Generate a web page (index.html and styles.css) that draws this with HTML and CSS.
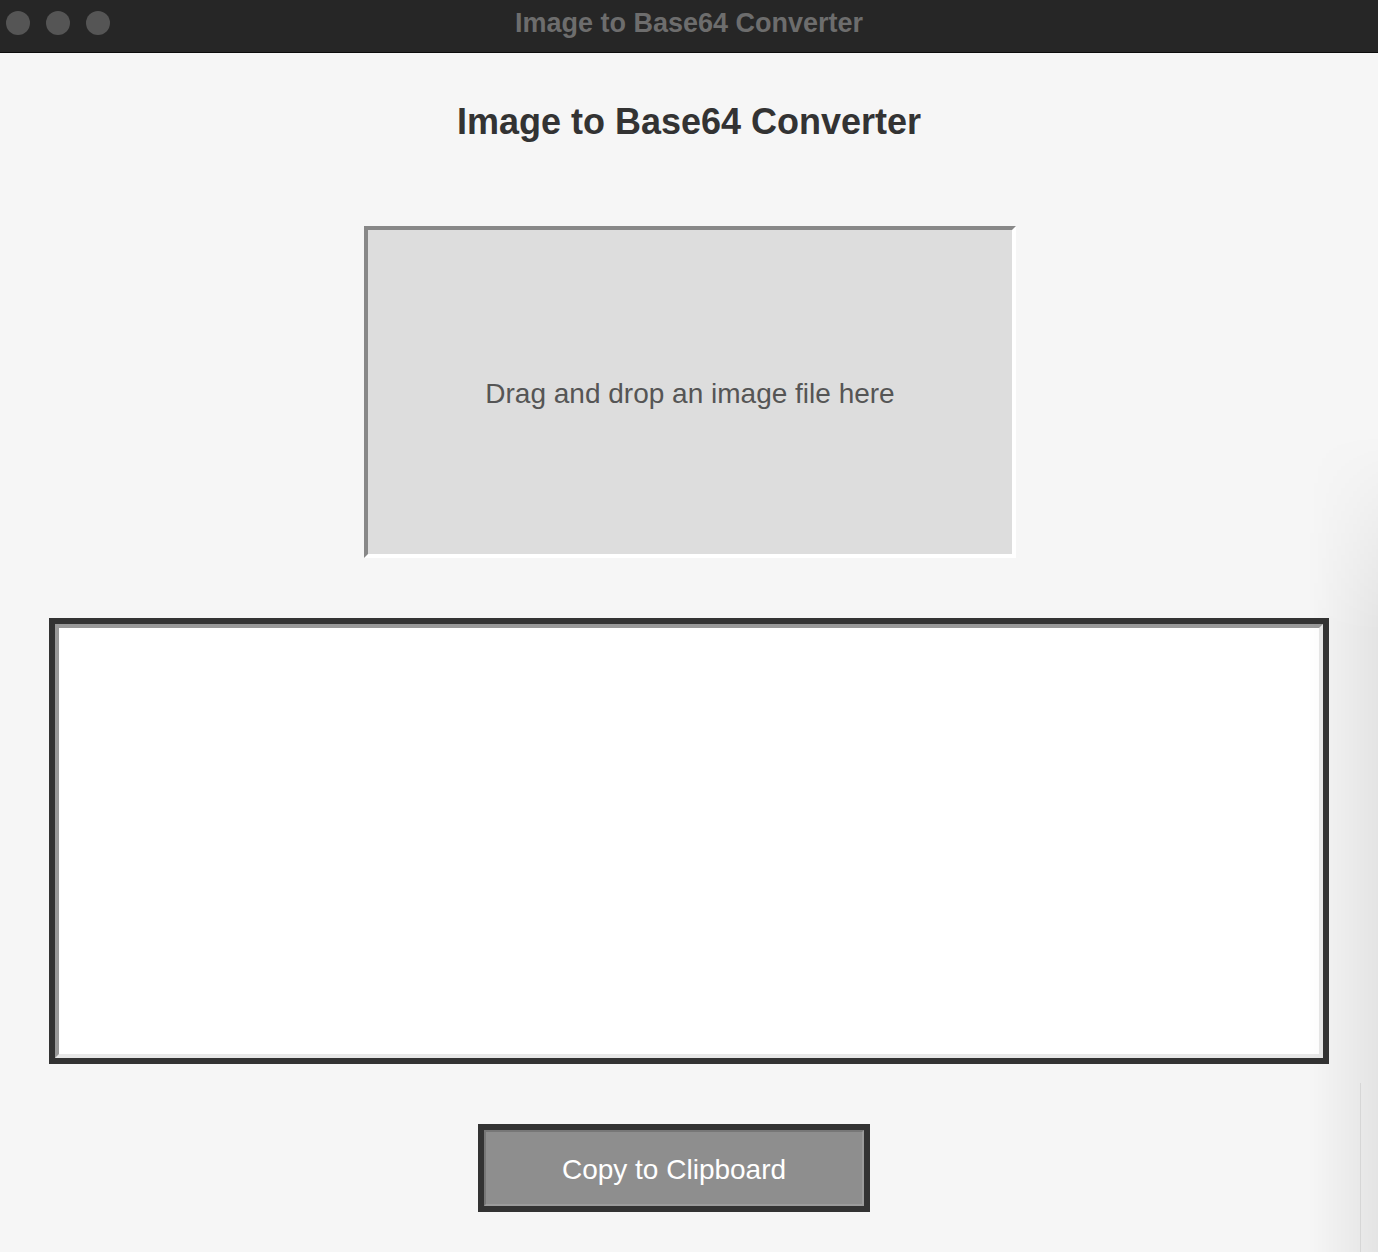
FILE: index.html
```html
<!DOCTYPE html>
<html>
<head>
<meta charset="utf-8">
<link rel="stylesheet" href="styles.css">
</head>
<body>
<div class="window">
  <div class="titlebar">
    <div class="lights">
      <span class="light"></span><span class="light"></span><span class="light"></span>
    </div>
    <div class="wtitle">Image to Base64 Converter</div>
  </div>
  <main class="content">
    <h1 class="heading">Image to Base64 Converter</h1>
    <div class="dropzone">Drag and drop an image file here</div>
    <div class="output"><div class="output-inner"></div></div>
    <div class="btn-frame"><button class="copy-btn">Copy to Clipboard</button></div>
    <div class="edge-shadow"></div>
    <div class="edge-line"></div>
  </main>
</div>
</body>
</html>
```

FILE: styles.css
```css
html, body {
  margin: 0;
  padding: 0;
  background: #f6f6f6;
  font-family: "Liberation Sans", Arial, sans-serif;
}
.window {
  width: 1378px;
  height: 1252px;
  display: flex;
  flex-direction: column;
  overflow: hidden;
}
.titlebar {
  height: 52px;
  background: #262626;
  border-bottom: 1px solid #0c0c0c;
  position: relative;
  display: flex;
  align-items: center;
  justify-content: center;
  flex-shrink: 0;
}
.lights {
  position: absolute;
  left: 6px;
  top: 11px;
  display: flex;
  gap: 16px;
}
.light {
  width: 24px;
  height: 24px;
  border-radius: 50%;
  background: #555555;
}
.wtitle {
  color: #6d6d6d;
  font-weight: bold;
  font-size: 27px;
  margin-top: -5px;
}
.content {
  flex: 1;
  position: relative;
  display: flex;
  flex-direction: column;
  align-items: center;
}
.heading {
  margin: 47px 0 0 0;
  font-size: 36px;
  line-height: 44px;
  color: #333333;
  font-weight: bold;
}
.dropzone {
  margin-top: 82px;
  margin-left: 2px;
  width: 644px;
  height: 320px;
  padding-top: 4px;
  border: 4px solid;
  border-color: #888888 #ffffff #ffffff #888888;
  background: #dddddd;
  color: #555555;
  font-size: 28px;
  display: flex;
  align-items: center;
  justify-content: center;
}
.output {
  margin-top: 60px;
  width: 1268px;
  height: 434px;
  border: 6px solid #333333;
}
.output-inner {
  height: 426px;
  border: 4px solid;
  border-color: #999999 #e8e8e8 #e8e8e8 #999999;
  background: #ffffff;
}
.btn-frame {
  margin-top: 60px;
  margin-right: 30px;
  width: 380px;
  height: 76px;
  border: 6px solid #333333;
  display: flex;
}
.copy-btn {
  flex: 1;
  margin: 0;
  border: 2px solid;
  border-color: #777777 #9c9c9c #9c9c9c #777777;
  background: #8e8e8e;
  color: #ffffff;
  font-family: "Liberation Sans", Arial, sans-serif;
  font-size: 28px;
  padding: 4px 0 0 0;
}
.edge-shadow {
  position: absolute;
  right: 0;
  top: 380px;
  bottom: 0;
  width: 70px;
  background: linear-gradient(to right, rgba(0,0,0,0), rgba(0,0,0,0.07));
  -webkit-mask-image: linear-gradient(to bottom, transparent, black 200px);
  mask-image: linear-gradient(to bottom, transparent, black 200px);
  pointer-events: none;
}
.edge-line {
  position: absolute;
  left: 1360px;
  top: 1030px;
  bottom: 0;
  width: 1px;
  background: #d6d6d6;
}
```
